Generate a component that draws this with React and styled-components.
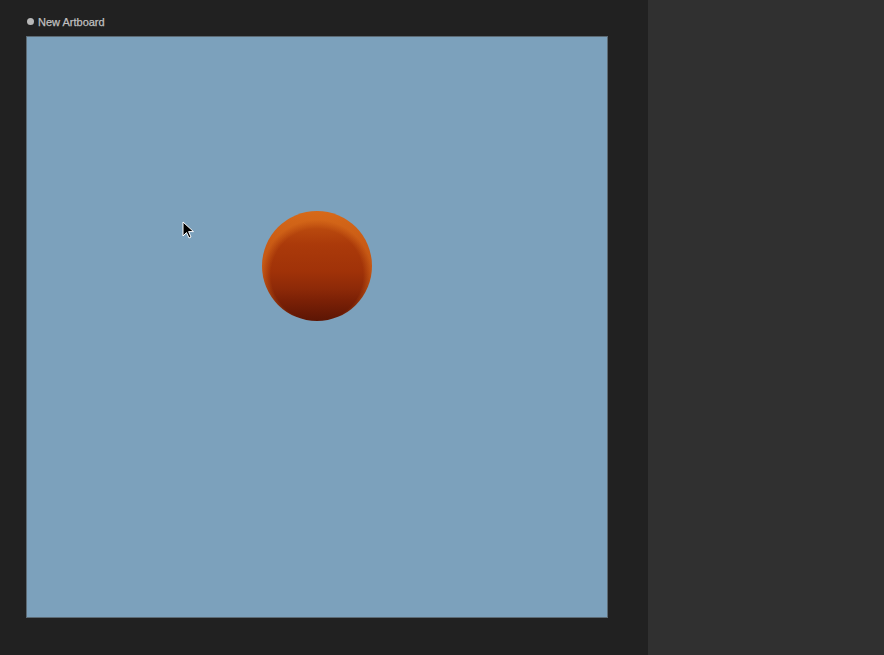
import styled, { createGlobalStyle } from "styled-components";

const Global = createGlobalStyle`
  html, body { margin: 0; padding: 0; background: #212121; }
  body { font-family: "Liberation Sans", Arial, sans-serif; }
`;

const Layout = styled.div`
  display: flex;
  width: 884px;
  height: 655px;
  overflow: hidden;
`;

const Canvas = styled.div`
  width: 648px;
  background: #212121;
  padding: 13px 0 0 26px;
  box-sizing: border-box;
  display: flex;
  flex-direction: column;
  gap: 6px;
`;

const Label = styled.div`
  display: flex;
  align-items: center;
  gap: 4px;
  height: 17px;
  color: #c0c0c0;
  font-size: 11px;
  font-weight: 400;
  font-family: "Liberation Sans", Arial, sans-serif;
  -webkit-text-stroke: 0.25px #c0c0c0;
  padding-left: 1px;
`;

const Dot = styled.span`
  width: 7px;
  height: 7px;
  border-radius: 50%;
  background: #b8b8b8;
`;

const Artboard = styled.div`
  position: relative;
  width: 580px;
  height: 580px;
  background: #7ca1bc;
  border: 1px solid #5c6a74;
`;

const Sphere = styled.div`
  position: absolute;
  left: 235px;
  top: 174px;
  width: 110px;
  height: 110px;
  border-radius: 50%;
  background:
    radial-gradient(circle at 50% 58%, rgba(0,0,0,0) 46px, rgba(226,118,30,0.55) 55px),
    linear-gradient(180deg, #c95a12 0%, #ab3a0a 30%, #a03208 55%, #8e2a08 70%, #7a2006 82%, #5c1504 100%);
`;

const Cursor = styled.svg`
  position: absolute;
  left: 155px;
  top: 184px;
`;

const Panel = styled.div`
  flex: 1;
  background: #303030;
`;

export default function App() {
  return (
    <Layout>
      <Global />
      <Canvas>
        <Label>
          <Dot />
          New Artboard
        </Label>
        <Artboard>
          <Sphere />
          <Cursor width="14" height="20" viewBox="0 0 14 20">
            <path d="M1 1 L1 15 L4.5 11.5 L7 17 L9 16 L6.6 10.6 L11.5 10.6 Z" fill="#000" stroke="#fff" strokeWidth="1" />
          </Cursor>
        </Artboard>
      </Canvas>
      <Panel />
    </Layout>
  );
}
